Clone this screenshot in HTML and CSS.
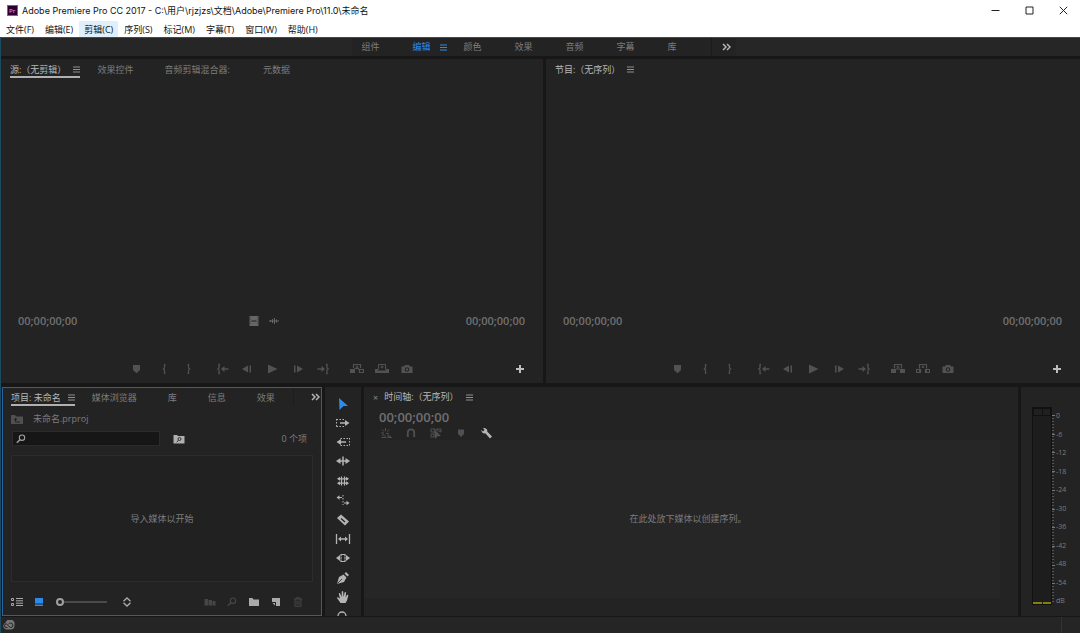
FILE: index.html
```html
<!DOCTYPE html>
<html lang="zh-CN">
<head>
<meta charset="utf-8">
<title>Adobe Premiere Pro CC 2017</title>
<link rel="stylesheet" href="styles.css">
</head>
<body>
<svg class="sprite" aria-hidden="true">
  <symbol id="menu" viewBox="0 0 7 7"><path d="M0 1h7M0 3.5h7M0 6h7" stroke="currentColor" stroke-width="1"/></symbol>
  <symbol id="more" viewBox="0 0 9 8"><path d="M1 1l3 3-3 3M5 1l3 3-3 3" fill="none" stroke="currentColor" stroke-width="1.5"/></symbol>
  <symbol id="marker" viewBox="0 0 14 12"><path d="M3 2h7v5L6.500 10.300 3 7z" fill="currentColor"/></symbol>
  <symbol id="in" viewBox="0 0 14 12"><path d="M8.500 1.500H7.500V5L6.300 6l1.200 1v3.500h1" fill="none" stroke="currentColor" stroke-width="1.200"/></symbol>
  <symbol id="out" viewBox="0 0 14 12"><path d="M5.500 1.500h1V5l1.200 1-1.200 1v3.500h-1" fill="none" stroke="currentColor" stroke-width="1.200"/></symbol>
  <symbol id="goin" viewBox="0 0 14 12"><path d="M4 1.500H3V5L1.800 6 3 7v3.500h1M7 6h5.500" fill="none" stroke="currentColor" stroke-width="1.300"/><path d="M5 6l3.500-3v6z" fill="currentColor"/></symbol>
  <symbol id="goout" viewBox="0 0 14 12"><path d="M10 1.500h1V5l1.200 1L11 7v3.500h-1M1.500 6H7" fill="none" stroke="currentColor" stroke-width="1.300"/><path d="M9 6L5.500 3v6z" fill="currentColor"/></symbol>
  <symbol id="back" viewBox="0 0 14 12"><path d="M1 6l6-3.500v7zM8.500 2.500H10v7H8.500z" fill="currentColor"/></symbol>
  <symbol id="fwd" viewBox="0 0 14 12"><path d="M12 6L6 2.500v7zM3 2.500h1.500v7H3z" fill="currentColor"/></symbol>
  <symbol id="play" viewBox="0 0 14 12"><path d="M2 1.500L11.500 6 2 10.500z" fill="currentColor"/></symbol>
  <symbol id="insert" viewBox="0 0 14 12"><path d="M0 6h5v4H0z" fill="currentColor"/><path d="M9.500 6.500h4v3h-4zM3.500 5V1.500h7V5M4.500 5.500h4v1.500M7 2.500v3M5.500 4h3" fill="none" stroke="currentColor" stroke-width="1.200"/></symbol>
  <symbol id="overwrite" viewBox="0 0 14 12"><path d="M0 6h3v1.500h8V6h3v4H0z" fill="currentColor"/><path d="M3.500 6.500v-5h7v5M7 2.500v3M5.500 4h3" fill="none" stroke="currentColor"/></symbol>
  <symbol id="lift" viewBox="0 0 14 12"><path d="M0 6h5v4H0zM9 6h5v4H9zM5 5.500h4v1H5z" fill="currentColor"/><path d="M3.500 5.500v-4h7v4M7 2.500v3M5.500 4h3" fill="none" stroke="currentColor" stroke-width="1.200"/></symbol>
  <symbol id="extract" viewBox="0 0 14 12"><path d="M.5 6.500h4v3h-4zM9.500 6.500h4v3h-4zM3.500 5.500v-4h7v4M7 2.500V5M5.500 4h3" fill="none" stroke="currentColor" stroke-width="1.200"/><path d="M3 6l2 2-2 2zM11 6L9 8l2 2z" fill="currentColor"/></symbol>
  <symbol id="camera" viewBox="0 0 14 12"><path fill-rule="evenodd" d="M1.500 3.500H4L5 2h4l1 1.500h2.500V10h-11zM7 4.200a2.300 2.300 0 100 4.600 2.300 2.300 0 000-4.600zM7 5.300a1.200 1.200 0 110 2.400 1.200 1.200 0 010-2.400z" fill="currentColor"/></symbol>
  <symbol id="plus" viewBox="0 0 10 10"><path d="M5 1v8M1 5h8" stroke="currentColor" stroke-width="2"/></symbol>
  <symbol id="film" viewBox="0 0 10 10"><path fill-rule="evenodd" d="M.5 0h9v10h-9zM2.500 4.500h5v1h-5z" fill="currentColor"/><path d="M1.500 1v8M8.500 1v8" stroke="#484848" stroke-dasharray="1 1"/></symbol>
  <symbol id="wave" viewBox="0 0 10 10"><path d="M0 5h10M1.500 4v2M3.500 3v4M5.500 2v6M7.500 3.500v3" stroke="currentColor"/></symbol>
  <symbol id="search" viewBox="0 0 10 10"><circle cx="6" cy="3.700" r="2.700" fill="none" stroke="currentColor" stroke-width="1.100"/><path d="M4 5.700L.8 8.800" stroke="currentColor" stroke-width="1.500"/></symbol>
  <symbol id="folder" viewBox="0 0 12 10"><path d="M1 1h3.500l1 1.500H11V9H1z" fill="currentColor"/></symbol>
  <symbol id="folderup" viewBox="0 0 12 10"><path d="M0 1h4l1 1.500h7V10H0z" fill="currentColor"/><path d="M4.500 4.500V8H9M3 6l1.500-1.800L6 6" fill="none" stroke="#232323"/></symbol>
  <symbol id="foldersearch" viewBox="0 0 12 10"><path d="M.5 1H4l1 1h6.500v7.500H.5z" fill="currentColor"/><circle cx="6.500" cy="5" r="1.500" fill="none" stroke="#232323" stroke-width=".9"/><path d="M5.500 6.300L3.700 8" stroke="#232323"/></symbol>
  <symbol id="list" viewBox="0 0 12 10"><path d="M.5 1.500h2v2h-2zM.5 6.500h2v2h-2z" fill="none" stroke="currentColor"/><path d="M5 1.500h7M5 3.800h7M5 6.200h7M5 8.500h7" stroke="currentColor"/></symbol>
  <symbol id="thumb" viewBox="0 0 10 10"><path d="M1 1h8v5.500H1zM1 7.500h8V9H1z" fill="currentColor"/></symbol>
  <symbol id="sort" viewBox="0 0 10 10"><path d="M1.500 4.200L5 1l3.500 3.200M1.500 5.800L5 9l3.500-3.200" fill="none" stroke="currentColor" stroke-width="1.400"/></symbol>
  <symbol id="auto" viewBox="0 0 12 10"><path d="M.5 2H4v6.500H.5zM4.500 3h3.500v5.500H4.500zM8.500 4h3v4.500h-3z" fill="currentColor"/></symbol>
  <symbol id="newitem" viewBox="0 0 10 10"><path d="M1 1h8v8H5V5H1z" fill="currentColor"/><path d="M1.500 6H4v2.500z" fill="currentColor"/></symbol>
  <symbol id="trash" viewBox="0 0 10 10"><path d="M1 2h8M3.500 2V.7h3V2M2 2v7.300h6V2M4 3.500V8M6 3.500V8" fill="none" stroke="currentColor"/></symbol>
  <symbol id="select" viewBox="0 0 16 14"><path d="M4 1l9 8H8.500L4.500 13z" fill="currentColor"/></symbol>
  <symbol id="trackf" viewBox="0 0 16 14"><path d="M1.500 3.500h9M1.500 10.500h9M1.500 3v8" fill="none" stroke="currentColor" stroke-dasharray="1.500 1.500"/><path d="M5 6.200h5V4l4.500 3L10 10V7.800H5z" fill="currentColor"/></symbol>
  <symbol id="trackb" viewBox="0 0 16 14"><path d="M5.500 3.500h9M5.500 10.500h9M14.500 3v8" fill="none" stroke="currentColor" stroke-dasharray="1.500 1.500"/><path d="M11 6.200H6V4L1.500 7 6 10V7.800h5z" fill="currentColor"/></symbol>
  <symbol id="ripple" viewBox="0 0 16 14"><path d="M8 2.500v9" stroke="currentColor" stroke-width="1.500"/><path d="M1 7l4.500-3v2.300h5V4L15 7l-4.500 3V7.700h-5V10z" fill="currentColor"/></symbol>
  <symbol id="rolling" viewBox="0 0 16 14"><path d="M6.500 2.500v9M9.500 2.500v9M3 4.800h10M3 9.200h10" stroke="currentColor" stroke-width="1.200"/><path d="M2 4.800l3-2v4zM14 4.800l-3-2v4zM2 9.200l3-2v4zM14 9.200l-3-2v4z" fill="currentColor"/></symbol>
  <symbol id="rate" viewBox="0 0 16 14"><path d="M8 2v10" stroke="currentColor" stroke-dasharray="1.500 1.500"/><path d="M1.500 4.500l3-2.200v1.700H7v1H4.500v1.700zM14.500 10l-3-2.200v1.700H9v1h2.500v1.700z" fill="currentColor"/></symbol>
  <symbol id="razor" viewBox="0 0 16 14"><path d="M2 5l4-3.500 8 7-4 4z" fill="currentColor"/><path d="M6 5.500l4 3.500" stroke="#232323" stroke-width="1.200"/></symbol>
  <symbol id="slip" viewBox="0 0 16 14"><path d="M1.500 2v10M14.500 2v10M4 7h8" stroke="currentColor" stroke-width="1.300"/><path d="M3 7l3-2.500v5zM13 7l-3-2.500v5z" fill="currentColor"/></symbol>
  <symbol id="slide" viewBox="0 0 16 14"><path d="M6 5.500v-2h4v2M6 8.500v2h4v-2M4 7h3M9 7h3" fill="none" stroke="currentColor" stroke-width="1.200"/><path d="M1 7l4-3v6zM15 7l-4-3v6z" fill="currentColor"/></symbol>
  <symbol id="pen" viewBox="0 0 16 14"><path d="M2 13l2-7 4.500-2.500 3 3L9 11zM9.500 2.500L11 1l3 3-1.500 1.500z" fill="currentColor"/><path d="M2.500 12.500L7 8" stroke="#232323" stroke-width=".8"/></symbol>
  <symbol id="hand" viewBox="0 0 16 14"><path d="M5.500 13L1.800 7.700q1-1 2 0L5 8.700 3.700 3.600q.8-1 1.500 0L6.700 7V1.500q.8-1 1.500 0L8.500 7l1.200-4.700q.9-.8 1.400.2L10.600 7.500l1.500-2.700q1-.5 1.200.6L12 10.500 10.500 13z" fill="currentColor"/></symbol>
  <symbol id="zoomtool" viewBox="0 0 16 14"><circle cx="7" cy="7" r="4" fill="none" stroke="currentColor" stroke-width="1.300"/><path d="M10 10l3 3" stroke="currentColor" stroke-width="1.500"/></symbol>
  <symbol id="nest" viewBox="0 0 12 12"><path d="M5.500 1v3M2 2.500l2 2M9 2.500L7.500 4.500M1 6h3M2 8.500l2-1M5 8v1.500M6 6.500h3M1.500 10.500h5M8 8l3.500 2.500H8z" stroke="currentColor" fill="none"/></symbol>
  <symbol id="magnet" viewBox="0 0 12 12"><path d="M2.800 10V5.500a3.200 3.200 0 016.400 0V10" fill="none" stroke="currentColor" stroke-width="1.800"/></symbol>
  <symbol id="linked" viewBox="0 0 12 12"><path d="M1 2h4v3H1zM6.500 2H11v3L6.500 3zM1 7h3v3H1z" fill="none" stroke="currentColor"/><path d="M4 2l7 7-3.500.3L5 12z" fill="currentColor"/></symbol>
  <symbol id="tag" viewBox="0 0 12 12"><path d="M3 2.500h6V7L6 10 3 7z" fill="currentColor"/></symbol>
  <symbol id="wrench" viewBox="0 0 12 12"><path d="M1 2.800L3 4.500 4.500 3 3 1.200Q5.500.3 7 2.500q.5 1 .2 2L12 9.500 10 11.500 5.300 6.300Q2 7 1 2.800z" fill="currentColor"/></symbol>
  <symbol id="cloud" viewBox="0 0 13 10"><path d="M4 9.500a3.500 3.500 0 01-.5-6.700A4.500 4.500 0 0112.500 5 4.300 4.300 0 018.500 9.500z" fill="#777"/><path d="M5.500 7.500H4.200a1.800 1.800 0 010-3.600c1.800 0 2.300 3.600 4.500 3.600a2.200 2.200 0 000-4.400A2.200 2.200 0 006.500 4" fill="none" stroke="#252525" stroke-width="1"/></symbol>
</svg>

<header class="titlebar">
  <svg class="app-icon" viewBox="0 0 11 11"><rect width="11" height="11" fill="#2a0034"/><rect x=".5" y=".5" width="10" height="10" fill="none" stroke="#a04cb8"/><text x="2" y="8" class="app-icon-text">Pr</text></svg>
  <h1 class="title">Adobe Premiere Pro CC 2017 - C:\用户\rjzjzs\文档\Adobe\Premiere Pro\11.0\未命名</h1>
  <div class="window-controls">
    <button aria-label="最小化"><svg viewBox="0 0 9 9"><path d="M.5 4.500h8" stroke="#222"/></svg></button>
    <button aria-label="最大化"><svg viewBox="0 0 9 9"><path d="M1 1h7v7H1z" fill="none" stroke="#222"/></svg></button>
    <button aria-label="关闭"><svg viewBox="0 0 9 9"><path d="M.8.8l7.400 7.400M8.200.8L.8 8.200" stroke="#222"/></svg></button>
  </div>
</header>
<nav class="menubar">
  <button>文件(F)</button><button>编辑(E)</button><button class="hover">剪辑(C)</button><button>序列(S)</button><button>标记(M)</button><button>字幕(T)</button><button>窗口(W)</button><button>帮助(H)</button>
</nav>

<div class="app">
  <nav class="workspaces">
    <div class="workspace-list">
      <button>组件</button>
      <button class="current">编辑 <svg class="menu-icon"><use href="#menu"/></svg></button>
      <button>颜色</button><button>效果</button><button>音频</button><button>字幕</button><button>库</button>
      <button class="more" aria-label="更多"><svg class="more-icon"><use href="#more"/></svg></button>
    </div>
  </nav>

  <main class="panels">
    <div class="row monitors">
      <section class="panel source">
        <div class="tabs">
          <button class="tab active">源:（无剪辑）<svg class="menu-icon"><use href="#menu"/></svg></button>
          <button class="tab">效果控件</button><button class="tab">音频剪辑混合器:&nbsp;</button><button class="tab">元数据</button>
        </div>
        <div class="screen"></div>
        <div class="times">
          <span class="timecode">00;00;00;00</span>
          <span class="drag-icons"><svg><use href="#film"/></svg><svg><use href="#wave"/></svg></span>
          <span class="timecode">00;00;00;00</span>
        </div>
        <div class="transport">
          <div class="controls">
            <button aria-label="添加标记"><svg><use href="#marker"/></svg></button>
            <button class="after-marker" aria-label="标记入点"><svg><use href="#in"/></svg></button>
            <button aria-label="标记出点"><svg><use href="#out"/></svg></button>
            <button class="group" aria-label="转到入点"><svg><use href="#goin"/></svg></button>
            <button aria-label="后退一帧"><svg><use href="#back"/></svg></button>
            <button aria-label="播放"><svg><use href="#play"/></svg></button>
            <button aria-label="前进一帧"><svg><use href="#fwd"/></svg></button>
            <button aria-label="转到出点"><svg><use href="#goout"/></svg></button>
            <button class="group" aria-label="插入"><svg><use href="#insert"/></svg></button>
            <button aria-label="覆盖"><svg><use href="#overwrite"/></svg></button>
            <button aria-label="导出帧"><svg><use href="#camera"/></svg></button>
          </div>
          <button class="add" aria-label="按钮编辑器"><svg><use href="#plus"/></svg></button>
        </div>
      </section>
      <section class="panel program">
        <div class="tabs">
          <button class="tab active plain">节目:（无序列）<svg class="menu-icon"><use href="#menu"/></svg></button>
        </div>
        <div class="screen"></div>
        <div class="times">
          <span class="timecode">00;00;00;00</span>
          <span class="timecode">00;00;00;00</span>
        </div>
        <div class="transport">
          <div class="controls">
            <button aria-label="添加标记"><svg><use href="#marker"/></svg></button>
            <button class="after-marker" aria-label="标记入点"><svg><use href="#in"/></svg></button>
            <button aria-label="标记出点"><svg><use href="#out"/></svg></button>
            <button class="group" aria-label="转到入点"><svg><use href="#goin"/></svg></button>
            <button aria-label="后退一帧"><svg><use href="#back"/></svg></button>
            <button aria-label="播放"><svg><use href="#play"/></svg></button>
            <button aria-label="前进一帧"><svg><use href="#fwd"/></svg></button>
            <button aria-label="转到出点"><svg><use href="#goout"/></svg></button>
            <button class="group" aria-label="提升"><svg><use href="#lift"/></svg></button>
            <button aria-label="提取"><svg><use href="#extract"/></svg></button>
            <button aria-label="导出帧"><svg><use href="#camera"/></svg></button>
          </div>
          <button class="add" aria-label="按钮编辑器"><svg><use href="#plus"/></svg></button>
        </div>
      </section>
    </div>

    <div class="row editing">
      <section class="panel project">
        <div class="tabs">
          <button class="tab active">项目: 未命名<svg class="menu-icon"><use href="#menu"/></svg></button>
          <button class="tab">媒体浏览器</button><button class="tab">库</button><button class="tab">信息</button><button class="tab last">效果</button>
          <button class="more" aria-label="更多"><svg class="more-icon"><use href="#more"/></svg></button>
        </div>
        <div class="path"><svg><use href="#folderup"/></svg><span>未命名.prproj</span></div>
        <div class="find">
          <label class="search"><svg><use href="#search"/></svg><input type="text" aria-label="搜索"></label>
          <button class="find-bin" aria-label="新建搜索素材箱"><svg><use href="#foldersearch"/></svg></button>
          <span class="count">0 个项</span>
        </div>
        <div class="bin">导入媒体以开始</div>
        <div class="project-tools">
          <button aria-label="列表视图"><svg><use href="#list"/></svg></button>
          <button class="blue" aria-label="图标视图"><svg><use href="#thumb"/></svg></button>
          <input class="size" type="range" min="0" max="100" value="0" aria-label="缩放">
          <button class="sort" aria-label="排序"><svg><use href="#sort"/></svg></button>
          <div class="project-actions">
            <button class="dim" aria-label="自动匹配序列"><svg><use href="#auto"/></svg></button>
            <button class="dim" aria-label="查找"><svg><use href="#search"/></svg></button>
            <button aria-label="新建素材箱"><svg><use href="#folder"/></svg></button>
            <button aria-label="新建项"><svg><use href="#newitem"/></svg></button>
            <button class="dim" aria-label="清除"><svg><use href="#trash"/></svg></button>
          </div>
        </div>
      </section>

      <section class="panel tools">
        <div><button class="blue" aria-label="选择"><svg><use href="#select"/></svg></button><button aria-label="向前选择轨道"><svg><use href="#trackf"/></svg></button><button aria-label="向后选择轨道"><svg><use href="#trackb"/></svg></button><button aria-label="波纹编辑"><svg><use href="#ripple"/></svg></button></div>
        <div><button aria-label="滚动编辑"><svg><use href="#rolling"/></svg></button><button aria-label="比率拉伸"><svg><use href="#rate"/></svg></button></div>
        <div><button aria-label="剃刀"><svg><use href="#razor"/></svg></button><button aria-label="外滑"><svg><use href="#slip"/></svg></button><button aria-label="内滑"><svg><use href="#slide"/></svg></button></div>
        <div><button aria-label="钢笔"><svg><use href="#pen"/></svg></button><button aria-label="手形"><svg><use href="#hand"/></svg></button><button aria-label="缩放"><svg><use href="#zoomtool"/></svg></button></div>
      </section>

      <section class="panel timeline">
        <div class="tabs">
          <button class="close" aria-label="关闭">×</button>
          <button class="tab active plain">时间轴:（无序列）<svg class="menu-icon"><use href="#menu"/></svg></button>
        </div>
        <span class="timecode large">00;00;00;00</span>
        <div class="timeline-tools">
          <button aria-label="嵌套"><svg><use href="#nest"/></svg></button>
          <button aria-label="对齐"><svg><use href="#magnet"/></svg></button>
          <button aria-label="链接选择项"><svg><use href="#linked"/></svg></button>
          <button aria-label="添加标记"><svg><use href="#tag"/></svg></button>
          <button class="bright" aria-label="时间轴显示设置"><svg><use href="#wrench"/></svg></button>
        </div>
        <div class="drop">在此处放下媒体以创建序列。</div>
      </section>

      <section class="panel meters">
        <div class="meter">
          <div class="peaks"><i></i><i></i></div>
          <div class="levels"><i></i><i></i></div>
        </div>
        <div class="ticks"></div>
        <div class="scale"><span>0</span><span>-6</span><span>-12</span><span>-18</span><span>-24</span><span>-30</span><span>-36</span><span>-42</span><span>-48</span><span>-54</span><span>dB</span></div>
      </section>
    </div>
  </main>
  <footer class="status"><svg><use href="#cloud"/></svg><span class="grip"></span></footer>
</div>
</body>
</html>
```

FILE: styles.css
```css
* { box-sizing: border-box; }

body {
  margin: 0;
  height: 100vh;
  display: flex;
  flex-direction: column;
  overflow: hidden;
  background: #fff;
  color: #7d7d7d;
  font: 9px/12px "Open Sans", "Noto Sans CJK SC", sans-serif;
}

button {
  display: flex;
  align-items: center;
  justify-content: center;
  margin: 0;
  padding: 0;
  border: 0;
  background: none;
  color: inherit;
  font: inherit;
  white-space: nowrap;
}

svg { display: block; flex: none; }
.sprite { position: absolute; width: 0; height: 0; }
.menu-icon { width: 7px; height: 7px; }
.more-icon { width: 9px; height: 8px; color: #b4b4b4; }
.blue { color: #2d8ceb; }

/* Window frame */
.titlebar { display: flex; align-items: center; height: 21px; padding-left: 7px; }
.app-icon { width: 11px; height: 11px; }
.app-icon-text { font: 600 6px "Open Sans", sans-serif; fill: #d58be8; }
.title { flex: 1; margin: 0 0 0 4px; color: #111; font: 400 9px/12px Inter, "Noto Sans CJK SC", sans-serif; }
.window-controls { display: flex; align-self: stretch; }
.window-controls button { width: 34px; }
.window-controls svg { width: 9px; height: 9px; }
.menubar { display: flex; gap: 1px; height: 16px; padding-left: 1px; color: #111; }
.menubar button { padding: 1px 5px 0; }
.menubar .hover { background: #dfeffc; }

.app {
  flex: 1;
  min-height: 0;
  display: flex;
  flex-direction: column;
  border-left: 1px solid #1c4a60;
  background: #171717;
}

/* Workspace bar */
.workspaces { display: flex; justify-content: center; height: 19px; padding-left: 6px; border-top: 1px solid #484848; background: #262626; }
.workspace-list { display: flex; padding-right: 1px; background: #232323; }
.workspace-list button { width: 51px; padding-left: 10px; justify-content: flex-start; }
.workspace-list .current { gap: 9px; color: #2d8ceb; }
.workspace-list .more { width: 24px; margin-left: 2px; border-left: 1px solid #1b1b1b; }

/* Panels */
.panels { flex: 1; min-height: 0; display: flex; flex-direction: column; gap: 4px; padding: 3px 0 1px; }
.row { display: grid; gap: 3px; min-height: 0; }
.monitors { flex: 324; grid-template-columns: 542fr 534fr; }
.editing { flex: 229; grid-template-columns: minmax(320px, 320fr) 36px minmax(0, 654fr) 59px; padding-left: 1px; }
.panel { display: flex; flex-direction: column; min-width: 0; min-height: 0; overflow: hidden; background: #232323; }
.tabs { display: flex; align-items: stretch; gap: 17px; height: 19px; padding-left: 9px; }
.tab { padding: 4px 14px 0 0; border-bottom: 2px solid transparent; }
.tab.active { gap: 7px; padding-right: 0; color: #b8b8b8; border-color: #b0b0b0; }
.tab.plain { border-color: transparent; }
.tab .menu-icon { color: #909090; }

.screen { flex: 1; }
.times { display: flex; align-items: center; justify-content: space-between; height: 16px; margin-bottom: 26px; padding: 0 18px 0 17px; }
.timecode { color: #707070; font: 600 11px/16px "Open Sans", sans-serif; }
.timecode.large { font-size: 13px; }
.drag-icons { display: flex; gap: 10px; padding-right: 15px; color: #666; }
.drag-icons svg { width: 10px; height: 10px; }
.transport { display: grid; grid-template-columns: 1fr auto 1fr; align-items: center; height: 28px; padding: 0 18px; color: #525252; }
.controls { grid-column: 2; display: flex; }
.controls button { width: 25px; }
.controls svg { width: 14px; height: 12px; }
.controls .after-marker { margin-left: 2px; }
.controls .group { margin-left: 9px; }
.add { justify-self: end; color: #bdbdbd; }
.add svg { width: 10px; height: 10px; }

/* Project panel */
.project { border: 1px solid #26629f; }
.project .tabs { height: 18px; padding-left: 8px; }
.project .tab { padding-top: 3px; }
.project .last { padding-right: 18px; border-right: 1px solid #1d1d1d; }
.path { display: flex; align-items: center; gap: 10px; height: 25px; padding-left: 8px; }
.path svg { width: 12px; height: 10px; color: #505050; }
.find { display: flex; align-items: center; padding: 0 14px 0 9px; }
.search { display: flex; align-items: center; width: 148px; height: 15px; padding-left: 3px; border: 1px solid #2b2b2b; background: #161616; color: #a0a0a0; }
.search svg { width: 10px; height: 10px; }
.search input { flex: 1; min-width: 0; height: 12px; padding: 0 4px; border: 0; outline: 0; background: none; color: #b8b8b8; font: inherit; }
.find-bin { margin-left: 13px; color: #b0b0b0; }
.find-bin svg { width: 12px; height: 10px; }
.count { margin-left: auto; }
.bin { flex: 1; display: flex; align-items: center; justify-content: center; margin: 9px 8px 0; border: 1px solid #2c2c2c; background: #212121; }
.project-tools { display: flex; align-items: center; height: 33px; padding: 6px 17px 0 8px; color: #aaa; }
.project-tools svg { width: 12px; height: 10px; }
.project-tools .blue { margin-left: 10px; }
.size { appearance: none; width: 51px; height: 10px; margin: 0 0 0 11px; background: linear-gradient(#4a4a4a, #4a4a4a) center / 100% 2px no-repeat; }
.size::-webkit-slider-thumb { appearance: none; width: 8px; height: 8px; border: 2px solid #a0a0a0; border-radius: 50%; background: #232323; }
.sort { margin-left: 14px; }
.project-actions { display: flex; gap: 10px; margin-left: auto; }
.project-tools .dim { color: #464646; }

/* Tools */
.tools { gap: 1px; padding-top: 7px; color: #b4b4b4; }
.tools > div { flex: none; display: flex; flex-direction: column; }
.tools button { height: 19px; }
.tools svg { width: 16px; height: 14px; }

/* Timeline */
.timeline .tabs { gap: 6px; }
.timeline .close { padding-top: 2px; color: #8a8a8a; }
.timeline .tab { padding-top: 3px; }
.timeline .timecode { margin: 3px 0 0 15px; }
.timeline-tools { display: flex; gap: 13px; padding: 2px 0 1px 16px; color: #505050; }
.timeline-tools svg { width: 12px; height: 12px; }
.timeline-tools .bright { color: #b4b4b4; }
.drop { flex: 1; display: flex; align-items: center; justify-content: center; margin: 0 18px 18px 0; padding-left: 12px; background: #262626; }

/* Audio meters */
.meters { flex-direction: row; padding: 20px 0 11px 11px; }
.meter { display: flex; flex-direction: column; width: 20px; border: 1px solid #111; background: #1d1d1d; }
.meter i { flex: 1; }
.peaks { display: flex; height: 8px; gap: 1px; border: 1px solid #111; background: #111; }
.peaks i { background: #202020; }
.levels { flex: 1; display: flex; align-items: flex-end; gap: 1px; }
.levels i { height: 2px; background: #85800d; }
.ticks {
  width: 3px;
  margin: 8px 0 3px;
  background:
    repeating-linear-gradient(#777 0 1px, transparent 1px 10%),
    repeating-linear-gradient(#555 0 1px, transparent 1px 3px) left / 2px 100% no-repeat;
}
.scale { display: flex; flex-direction: column; justify-content: space-between; margin: 5px 0 0 1px; font-size: 7px; line-height: 8px; }

.status { display: flex; align-items: center; justify-content: space-between; height: 16px; padding: 0 18px 0 1px; background: #252525; }
.status svg { width: 13px; height: 10px; }
.grip { width: 1px; height: 16px; background: #333; }
```
